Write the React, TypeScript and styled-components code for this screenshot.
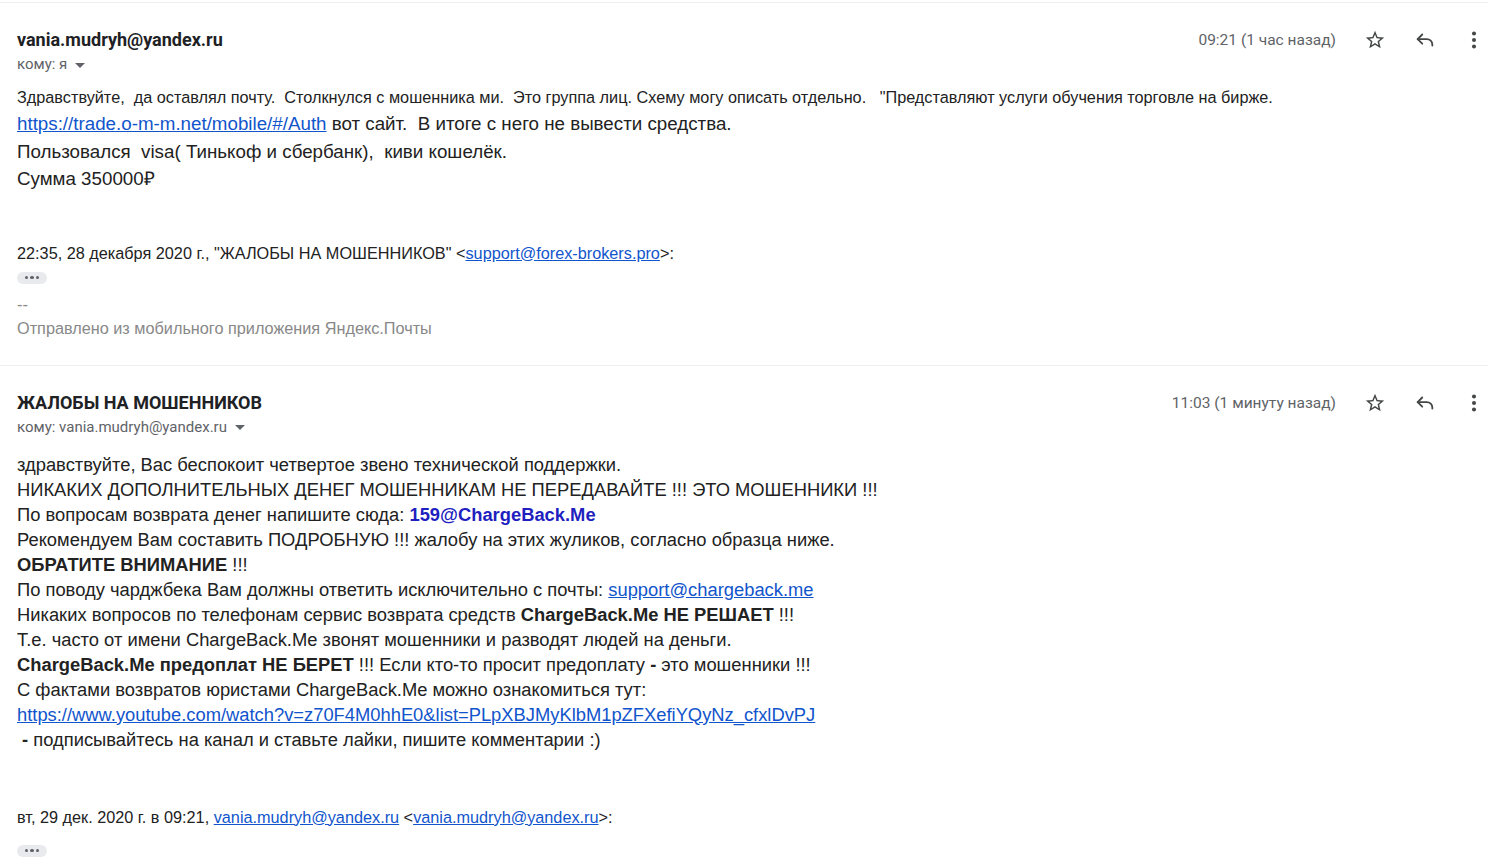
import styled, { createGlobalStyle } from "styled-components";

const GlobalStyle = createGlobalStyle`
  body {
    margin: 0;
    background: #ffffff;
    color: #222222;
  }
`;

const Page = styled.div`
  width: 1488px;
  padding-top: 2px;
`;

const Message = styled.section`
  border-top: 1px solid #eceff1;
  padding: 25px 0 25px 17px;
`;

const Header = styled.header`
  display: flex;
  align-items: flex-start;
  justify-content: space-between;
`;

const Who = styled.div`
  display: flex;
  flex-direction: column;
`;

const Sender = styled.div`
  font-family: Roboto, "Liberation Sans", sans-serif;
  font-weight: 700;
  font-size: 18px;
  line-height: 24px;
  color: #202124;
`;

const Recipient = styled.div`
  display: flex;
  align-items: center;
  gap: 8px;
  margin-top: 1px;
  font-family: Roboto, "Liberation Sans", sans-serif;
  font-size: 15px;
  line-height: 22px;
  color: #5f6368;
`;

const Caret = styled.span`
  width: 0;
  height: 0;
  border-left: 5px solid transparent;
  border-right: 5px solid transparent;
  border-top: 5px solid #5f6368;
  margin-top: 2px;
`;

const Meta = styled.div`
  display: flex;
  align-items: center;
  height: 24px;
`;

const Time = styled.span`
  font-family: Roboto, "Liberation Sans", sans-serif;
  font-size: 15.5px;
  color: #5f6368;
  margin-right: 19px;
`;

const IconButton = styled.button<{ $w: number; $gap: number }>`
  width: ${(p) => p.$w}px;
  height: 24px;
  margin-left: ${(p) => p.$gap}px;
  padding: 0;
  border: 0;
  background: none;
  display: flex;
  align-items: center;
  justify-content: center;
  color: #444746;
`;

const Body = styled.div<{ $top: number }>`
  margin-top: ${(p) => p.$top}px;
  font-family: "Liberation Sans", Arial, sans-serif;
`;

const Line = styled.div<{ $size: number; $lh: number; $muted?: boolean }>`
  font-size: ${(p) => p.$size}px;
  line-height: ${(p) => p.$lh}px;
  white-space: pre-wrap;
  color: ${(p) => (p.$muted ? "#888888" : "#222222")};
`;

const Link = styled.a`
  color: #1155cc;
  text-decoration: underline;
`;

const MailLink = styled.a`
  color: #1f1fbf;
  font-weight: 700;
  text-decoration: none;
`;

const Quote = styled.div<{ $top: number }>`
  margin-top: ${(p) => p.$top}px;
`;

const Ellipsis = styled.div<{ $top: number }>`
  display: flex;
  align-items: center;
  justify-content: center;
  gap: 2px;
  width: 30px;
  height: 12px;
  margin: ${(p) => p.$top}px 0 8px;
  border-radius: 6px;
  background: #e8eaed;
  span {
    width: 3.5px;
    height: 3.5px;
    border-radius: 50%;
    background: #5f6368;
  }
`;

const Star = () => (
  <svg width="22" height="22" viewBox="0 0 24 24" fill="currentColor">
    <path d="M22 9.24l-7.19-.62L12 2 9.19 8.63 2 9.24l5.46 4.73L5.82 21 12 17.27 18.18 21l-1.63-7.03L22 9.24zM12 15.4l-3.76 2.27 1-4.28-3.32-2.88 4.38-.38L12 6.1l1.71 4.04 4.38.38-3.32 2.88 1 4.28L12 15.4z" />
  </svg>
);

const Reply = () => (
  <svg width="22" height="22" viewBox="0 0 24 24" fill="none" stroke="currentColor" strokeWidth="2" strokeLinecap="round" strokeLinejoin="round">
    <path d="M9 6L4 11l5 5" />
    <path d="M4 11h10a6 6 0 0 1 6 6v1" />
  </svg>
);

const More = () => (
  <svg width="22" height="22" viewBox="0 0 24 24" fill="currentColor">
    <circle cx="12" cy="5" r="2.2" />
    <circle cx="12" cy="12" r="2.2" />
    <circle cx="12" cy="19" r="2.2" />
  </svg>
);

const Actions = ({ time }: { time: string }) => (
  <Meta>
    <Time>{time}</Time>
    <IconButton $w={40} $gap={0}>
      <Star />
    </IconButton>
    <IconButton $w={40} $gap={10}>
      <Reply />
    </IconButton>
    <IconButton $w={28} $gap={15}>
      <More />
    </IconButton>
  </Meta>
);

const Dots = ({ top }: { top: number }) => (
  <Ellipsis $top={top}>
    <span />
    <span />
    <span />
  </Ellipsis>
);

export default function App() {
  return (
    <Page>
      <GlobalStyle />
      <Message>
        <Header>
          <Who>
            <Sender>vania.mudryh@yandex.ru</Sender>
            <Recipient>
              кому: я <Caret />
            </Recipient>
          </Who>
          <Actions time="09:21 (1 час назад)" />
        </Header>
        <Body $top={10}>
          <Line $size={16.25} $lh={25}>
            {
              'Здравствуйте,  да оставлял почту.  Столкнулся с мошенника ми.  Это группа лиц. Схему могу описать отдельно.   "Представляют услуги обучения торговле на бирже.'
            }
          </Line>
          <Line $size={18.75} $lh={27.5}>
            <Link href="#">https://trade.o-m-m.net/mobile/#/Auth</Link>
            {" вот сайт.  В итоге с него не вывести средства."}
          </Line>
          <Line $size={18.75} $lh={27.5}>
            {"Пользовался  visa( Тинькоф и сбербанк),  киви кошелёк."}
          </Line>
          <Line $size={18.75} $lh={27.5}>
            Сумма 350000₽
          </Line>
          <Quote $top={48}>
            <Line $size={16.25} $lh={24}>
              {'22:35, 28 декабря 2020 г., "ЖАЛОБЫ НА МОШЕННИКОВ" <'}
              <Link href="#">support@forex-brokers.pro</Link>
              {">:"}
            </Line>
            <Dots top={7} />
            <Line $size={16.25} $lh={24} $muted>
              --
            </Line>
            <Line $size={16.25} $lh={24} $muted>
              Отправлено из мобильного приложения Яндекс.Почты
            </Line>
          </Quote>
        </Body>
      </Message>
      <Message>
        <Header>
          <Who>
            <Sender>ЖАЛОБЫ НА МОШЕННИКОВ</Sender>
            <Recipient>
              кому: vania.mudryh@yandex.ru <Caret />
            </Recipient>
          </Who>
          <Actions time="11:03 (1 минуту назад)" />
        </Header>
        <Body $top={14}>
          <Line $size={18.35} $lh={25}>
            здравствуйте, Вас беспокоит четвертое звено технической поддержки.
          </Line>
          <Line $size={18.35} $lh={25}>
            НИКАКИХ ДОПОЛНИТЕЛЬНЫХ ДЕНЕГ МОШЕННИКАМ НЕ ПЕРЕДАВАЙТЕ !!! ЭТО МОШЕННИКИ !!!
          </Line>
          <Line $size={18.35} $lh={25}>
            {"По вопросам возврата денег напишите сюда: "}
            <MailLink href="#">159@ChargeBack.Me</MailLink>
          </Line>
          <Line $size={18.35} $lh={25}>
            Рекомендуем Вам составить ПОДРОБНУЮ !!! жалобу на этих жуликов, согласно образца ниже.
          </Line>
          <Line $size={18.35} $lh={25}>
            <b>ОБРАТИТЕ ВНИМАНИЕ</b> !!!
          </Line>
          <Line $size={18.35} $lh={25}>
            {"По поводу чарджбека Вам должны ответить исключительно с почты: "}
            <Link href="#">support@chargeback.me</Link>
          </Line>
          <Line $size={18.35} $lh={25}>
            {"Никаких вопросов по телефонам сервис возврата средств "}
            <b>ChargeBack.Me НЕ РЕШАЕТ</b> !!!
          </Line>
          <Line $size={18.35} $lh={25}>
            Т.е. часто от имени ChargeBack.Me звонят мошенники и разводят людей на деньги.
          </Line>
          <Line $size={18.35} $lh={25}>
            <b>ChargeBack.Me предоплат НЕ БЕРЕТ</b>
            {" !!! Если кто-то просит предоплату "}
            <b>-</b>
            {" это мошенники !!!"}
          </Line>
          <Line $size={18.35} $lh={25}>
            С фактами возвратов юристами ChargeBack.Me можно ознакомиться тут:
          </Line>
          <Line $size={18.35} $lh={25}>
            <Link href="#">
              https://www.youtube.com/watch?v=z70F4M0hhE0&amp;list=PLpXBJMyKlbM1pZFXefiYQyNz_cfxlDvPJ
            </Link>
          </Line>
          <Line $size={18.35} $lh={25}>
            {" "}
            <b>-</b>
            {" подписывайтесь на канал и ставьте лайки, пишите комментарии :)"}
          </Line>
          <Quote $top={53}>
            <Line $size={16.25} $lh={24}>
              {"вт, 29 дек. 2020 г. в 09:21, "}
              <Link href="#">vania.mudryh@yandex.ru</Link>
              {" <"}
              <Link href="#">vania.mudryh@yandex.ru</Link>
              {">:"}
            </Line>
            <Dots top={16} />
          </Quote>
        </Body>
      </Message>
    </Page>
  );
}
